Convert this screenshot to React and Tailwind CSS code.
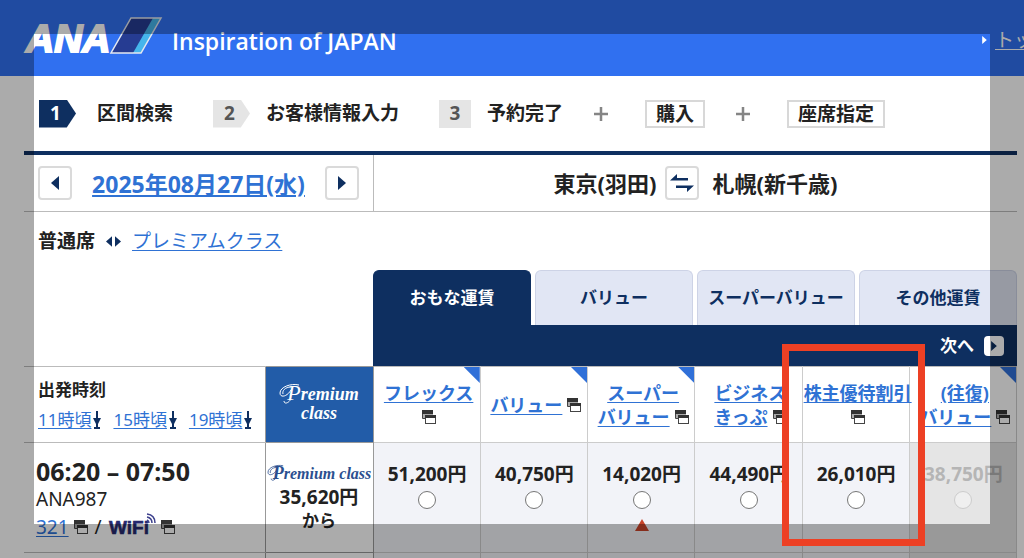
import { useState } from 'react';

const steps = [
  { no: '1', label: '区間検索', active: true, arrow: true },
  { no: '2', label: 'お客様情報入力', arrow: true },
  { no: '3', label: '予約完了' },
];

const fareTabs = ['おもな運賃', 'バリュー', 'スーパーバリュー', 'その他運賃'];

const jumpTimes = ['11時頃', '15時頃', '19時頃'];

const fares = [
  { id: 'flex', lines: ['フレックス'], iconBelow: true, corner: true, price: '51,200円' },
  { id: 'value', lines: ['バリュー'], corner: true, price: '40,750円' },
  { id: 'super', lines: ['スーパー', 'バリュー'], corner: true, price: '14,020円', lowest: true },
  { id: 'business', lines: ['ビジネス', 'きっぷ'], price: '44,490円' },
  { id: 'shareholder', lines: ['株主優待割引'], iconBelow: true, price: '26,010円' },
  { id: 'round', lines: ['(往復)', 'バリュー'], corner: true, price: '38,750円', disabled: true },
];

function Triangle({ dir = 'right', className = '' }) {
  return (
    <svg viewBox="0 0 8 14" className={className} fill="currentColor" aria-hidden="true">
      <path d={dir === 'right' ? 'M0 0L8 7L0 14Z' : 'M8 0L0 7L8 14Z'} />
    </svg>
  );
}

function PopupIcon() {
  return (
    <svg width="14" height="14" viewBox="0 0 14 14" className="inline-block shrink-0" aria-hidden="true">
      <path d="M0.5 1V8.5H3.5M10.5 4V5" fill="none" stroke="#444" />
      <rect x="1" y="4" width="10" height="4" fill="#aaa" />
      <rect x="0" y="0" width="11" height="4" fill="#333" />
      <rect x="3.5" y="5.5" width="10" height="8" fill="#fff" stroke="#444" />
      <rect x="3" y="5" width="11" height="3" fill="#333" />
    </svg>
  );
}

function JumpIcon() {
  return (
    <svg width="8" height="18" viewBox="0 0 8 18" className="shrink-0 text-[#0e2f60]" fill="currentColor" aria-hidden="true">
      <rect x="3" y="0" width="2" height="16" />
      <path d="M0 7H8L4 15Z" />
      <rect x="1" y="16" width="6" height="2" />
    </svg>
  );
}

function Logo() {
  return (
    <svg width="140" height="40" viewBox="0 0 140 40" className="shrink-0 overflow-visible" role="img" aria-label="ANA">
      <text x="2" y="35" fontFamily="Liberation Sans, Arial, sans-serif" fontSize="39" fontWeight="700" fontStyle="italic" fill="#fff" stroke="#fff" strokeWidth="2">
        ANA
      </text>
      <path d="M107 1H137L117 36H87Z" fill="#263c92" />
      <path d="M129 1H137L117 36H109Z" fill="#45b5ec" />
      <path d="M107 1H137L117 36H87Z" fill="none" stroke="#e4e8f0" strokeWidth="1.5" />
    </svg>
  );
}

function WifiLogo() {
  return (
    <svg width="47" height="28" viewBox="0 0 47 28" className="shrink-0 overflow-visible" role="img" aria-label="WiFi">
      <text x="0" y="21" fontFamily="Liberation Sans, Arial, sans-serif" fontSize="19" fontWeight="700" fill="#26296f" stroke="#26296f" strokeWidth="0.6">
        WiFi
      </text>
      <g fill="none" stroke="#3b3f8c" strokeWidth="1.5">
        <path d="M38 1Q46 2 46 10" />
        <path d="M38 4Q43 5 43 10" />
        <path d="M38 7Q40 8 40 10" />
      </g>
    </svg>
  );
}

/* loop that runs out to the left of the capital P */
function Swash({ className }) {
  return (
    <svg viewBox="0 0 12 20" className={className} fill="none" stroke="currentColor" strokeWidth="1" aria-hidden="true">
      <path d="M20 1C12 -1 1 3 1 9C1 14 8 13 12 6" />
      <path d="M12 3C6 3 3 7 4 10" />
      <path d="M5 17C5 20 9 20 12 15" />
    </svg>
  );
}

function PageHeader() {
  return (
    <header className="flex h-[76px] items-start overflow-hidden bg-[#3070f0] pl-6 text-white">
      <div className="flex items-start gap-2 pt-[17px]">
        <Logo />
        <p className="pt-2 font-['Open_Sans',sans-serif] text-[23px] font-semibold leading-8 whitespace-nowrap">
          Inspiration of JAPAN
        </p>
      </div>
      <a href="#top" className="ml-auto -mr-7 flex shrink-0 items-center gap-2 pt-7 text-[19px] leading-6">
        <Triangle className="h-2 w-[5px]" />
        <span className="underline underline-offset-2">トップ</span>
      </a>
    </header>
  );
}

function PlusIcon({ className }) {
  return (
    <svg width="14" height="14" viewBox="0 0 14 14" className={`shrink-0 ${className}`} stroke="#858585" strokeWidth="2.5" aria-hidden="true">
      <path d="M7 0V14M0 7H14" />
    </svg>
  );
}

function Steps() {
  return (
    <div className="flex h-[75px] items-center pl-[15px] text-[19px] font-bold whitespace-nowrap">
      <ol className="flex items-center gap-10">
        {steps.map((step) => (
          <li key={step.no} className="flex items-center gap-4">
            <span
              className={`flex h-7 items-center font-['Noto_Sans',sans-serif] ${
                step.arrow
                  ? 'w-[37px] pl-[11px] [clip-path:polygon(0_0,75%_0,100%_50%,75%_100%,0_100%)]'
                  : 'w-8 justify-center'
              } ${step.active ? 'mr-[5px] bg-[#0e2f60] text-white' : 'bg-[#e5e5e5] text-[#555]'}`}
            >
              {step.no}
            </span>
            {step.label}
          </li>
        ))}
      </ol>
      <PlusIcon className="ml-[31px] mr-[37px]" />
      <span className="border-2 border-[#d8d8d8] px-[9px] leading-6">購入</span>
      <PlusIcon className="ml-[31px] mr-[37px]" />
      <span className="border-2 border-[#d8d8d8] px-[9px] leading-6">座席指定</span>
    </div>
  );
}

const squareButton =
  'flex size-[34px] shrink-0 items-center justify-center rounded-[4px] border-2 border-[#dadada] bg-white text-[#0e2f60]';

function RouteBar() {
  return (
    <div className="flex h-[61px] border-t-4 border-b border-t-[#0e2f60] border-b-[#bbb]">
      <div className="flex w-[349px] shrink-0 items-center justify-between px-[14px]">
        <button type="button" aria-label="前の日" className={squareButton}>
          <Triangle dir="left" className="h-[14px] w-2" />
        </button>
        <a href="#date" className="pt-[2px] text-[23px] font-bold whitespace-nowrap text-[#2f72d4] underline underline-offset-2">
          2025年08月27日(水)
        </a>
        <button type="button" aria-label="次の日" className={squareButton}>
          <Triangle className="h-[14px] w-2" />
        </button>
      </div>
      <div className="flex flex-1 items-center justify-center border-l border-[#bbb] text-[22px] font-bold whitespace-nowrap">
        <span>東京(羽田)</span>
        <button type="button" aria-label="区間を入れ替える" className={`ml-2 mr-[14px] ${squareButton}`}>
          <svg width="24" height="20" viewBox="0 0 24 20" fill="currentColor" aria-hidden="true">
            <path d="M0 7.5L7 1V5H18V7.5Z" />
            <path d="M24 12.5L17 19V15H6V12.5Z" />
          </svg>
        </button>
        <span>札幌(新千歳)</span>
      </div>
    </div>
  );
}

function CabinSwitch() {
  return (
    <div className="flex h-[58px] items-center gap-[11px] pl-[14px] text-[19px]">
      <strong>普通席</strong>
      <span className="flex gap-[3px] text-[#0e2f60]">
        <Triangle dir="left" className="h-[11px] w-[6px]" />
        <Triangle className="h-[11px] w-[6px]" />
      </span>
      <a href="#premium" className="text-[#2f72d4] underline underline-offset-2">
        プレミアムクラス
      </a>
    </div>
  );
}

function FareTabs() {
  const [current, setCurrent] = useState(0);

  return (
    <div className="ml-[349px]">
      <div role="tablist" className="flex h-[55px] gap-1">
        {fareTabs.map((tab, i) => (
          <button
            key={tab}
            type="button"
            role="tab"
            aria-selected={i === current}
            onClick={() => setCurrent(i)}
            className={`min-w-0 flex-1 rounded-t-md border border-b-0 text-[17px] font-bold whitespace-nowrap ${
              i === current ? 'border-[#0e2f60] bg-[#0e2f60] text-white' : 'border-[#cdd3e6] bg-[#e1e6f4] text-[#0e2f60]'
            }`}
          >
            {tab}
          </button>
        ))}
      </div>
      <div className="flex h-[41px] items-center justify-end bg-[#0e2f60] pr-[13px]">
        <button type="button" className="flex items-center gap-[10px] text-[17px] font-bold text-white">
          次へ
          <span className="flex size-5 items-center justify-center rounded-[4px] bg-white text-[#0e2f60]">
            <Triangle className="h-[10px] w-[6px]" />
          </span>
        </button>
      </div>
    </div>
  );
}

function FareHead({ fare }) {
  return (
    <th scope="col" className="relative border border-[#ccc] border-t-[#bbb] p-0 text-[18px] leading-6 font-bold whitespace-nowrap">
      {fare.corner && (
        <span className="absolute top-0 right-0 size-4 bg-[#3070d8] [clip-path:polygon(0_0,100%_0,100%_100%)]" />
      )}
      <div className="-mr-1 flex flex-col items-center">
        {fare.lines.map((line, i) => (
          <span key={line} className="flex items-center gap-[5px]">
            <a href={`#${fare.id}`} className="text-[#2f72d4] underline underline-offset-2">
              {line}
            </a>
            {!fare.iconBelow && i === fare.lines.length - 1 && <PopupIcon />}
          </span>
        ))}
        {fare.iconBelow && (
          <span className="flex h-6 items-center">
            <PopupIcon />
          </span>
        )}
      </div>
    </th>
  );
}

function FareCell({ fare }) {
  return (
    <td
      className={`border border-[#ccc] p-0 pt-[19px] pl-px text-center align-top ${
        fare.disabled ? 'bg-[#e5e5e5] text-[#b5b5b5]' : 'bg-[#f2f3f8]'
      }`}
    >
      <label className="flex flex-col items-center gap-[5px] text-[19px] leading-6 font-bold whitespace-nowrap">
        {fare.price}
        <input
          type="radio"
          name="fare"
          value={fare.id}
          disabled={fare.disabled}
          className={`size-[18px] appearance-none rounded-full border ${
            fare.disabled ? 'border-[#ccc] bg-[#efefef]' : 'border-[#767676] bg-white checked:border-[5px]'
          }`}
        />
      </label>
      {fare.lowest && (
        <svg width="14" height="12" viewBox="0 0 14 12" className="mx-auto mt-[10px]" aria-hidden="true">
          <path d="M7 0L14 12H0Z" fill="#c8442a" />
        </svg>
      )}
    </td>
  );
}

function FareTable() {
  return (
    <table className="w-full table-fixed border-collapse border-t border-[#bbb]">
      <colgroup>
        <col className="w-[241px]" />
        <col className="w-[108px]" />
        {fares.map((fare) => (
          <col key={fare.id} />
        ))}
      </colgroup>
      <thead>
        <tr className="h-[76px]">
          <th scope="col" className="border-y border-[#bbb] p-0 pl-[14px] text-left">
            <p className="text-[17px] leading-[30px] font-bold">出発時刻</p>
            <ul className="flex gap-3 text-[17px] leading-[30px] font-normal whitespace-nowrap">
              {jumpTimes.map((time) => (
                <li key={time} className="flex items-center gap-[2px]">
                  <a href={`#${time}`} className="text-[#2f72d4] underline underline-offset-2">
                    {time}
                  </a>
                  <JumpIcon />
                </li>
              ))}
            </ul>
          </th>
          <th scope="col" className="border border-[#999] bg-[#225ca8] p-0 text-white">
            <div className="pb-1 font-['Liberation_Serif',serif] text-[18px] leading-[18px] font-bold italic">
              <span className="flex items-center justify-center">
                <Swash className="-mr-1 h-5 w-3 overflow-visible" />
                <span>
                  <span className="text-[22px] font-normal">P</span>remium
                </span>
              </span>
              class
            </div>
          </th>
          {fares.map((fare) => (
            <FareHead key={fare.id} fare={fare} />
          ))}
        </tr>
      </thead>
      <tbody>
        <tr className="h-[110px]">
          <td className="border-y border-[#bbb] p-0 pt-[14px] pl-3 align-top text-[19px] leading-7 whitespace-nowrap">
            <p className="text-[25px] leading-7 font-bold">06:20 – 07:50</p>
            <p>ANA987</p>
            <p className="flex items-center gap-[5px]">
              <a href="#aircraft" className="text-[#2f72d4] underline underline-offset-2">
                321
              </a>
              <PopupIcon />
              <span className="mx-[2px]">/</span>
              <WifiLogo />
              <PopupIcon />
            </p>
          </td>
          <td className="border border-[#999] p-0 pt-[18px] text-center align-top text-[19px] leading-6 font-bold whitespace-nowrap">
            <div className="flex h-6 items-center justify-center font-['Liberation_Serif',serif] text-[16px] text-[#2b4f8f] italic">
              <Swash className="-mr-1 h-4 w-[10px] overflow-visible" />
              <span>
                <span className="text-[18px]">P</span>remium class
              </span>
            </div>
            <p>35,620円</p>
            <p className="text-[17px] leading-6">から</p>
          </td>
          {fares.map((fare) => (
            <FareCell key={fare.id} fare={fare} />
          ))}
        </tr>
        <tr className="h-[5px]">
          <td className="p-0" />
          <td className="border-x border-[#999] p-0" />
          {fares.map((fare) => (
            <td key={fare.id} className={`border-x border-[#ccc] p-0 ${fare.disabled ? 'bg-[#e5e5e5]' : 'bg-[#f2f3f8]'}`} />
          ))}
        </tr>
      </tbody>
    </table>
  );
}

export default function App() {
  return (
    <div className="relative min-h-screen overflow-hidden bg-white font-['Noto_Sans','Noto_Sans_CJK_JP',sans-serif] text-[#222]">
      <PageHeader />
      <main className="pr-[7px] pl-6">
        <Steps />
        <RouteBar />
        <CabinSwitch />
        <div className="relative">
          <FareTabs />
          <FareTable />
          {/* highlight around the shareholder fare */}
          <div className="pointer-events-none absolute top-[74px] right-[92px] z-20 h-[202px] w-[143px] border-7 border-[#ed4024]" />
        </div>
      </main>
      {/* dimmed edge */}
      <div className="pointer-events-none absolute inset-0 z-10 border-[34px] border-black/33" />
    </div>
  );
}
